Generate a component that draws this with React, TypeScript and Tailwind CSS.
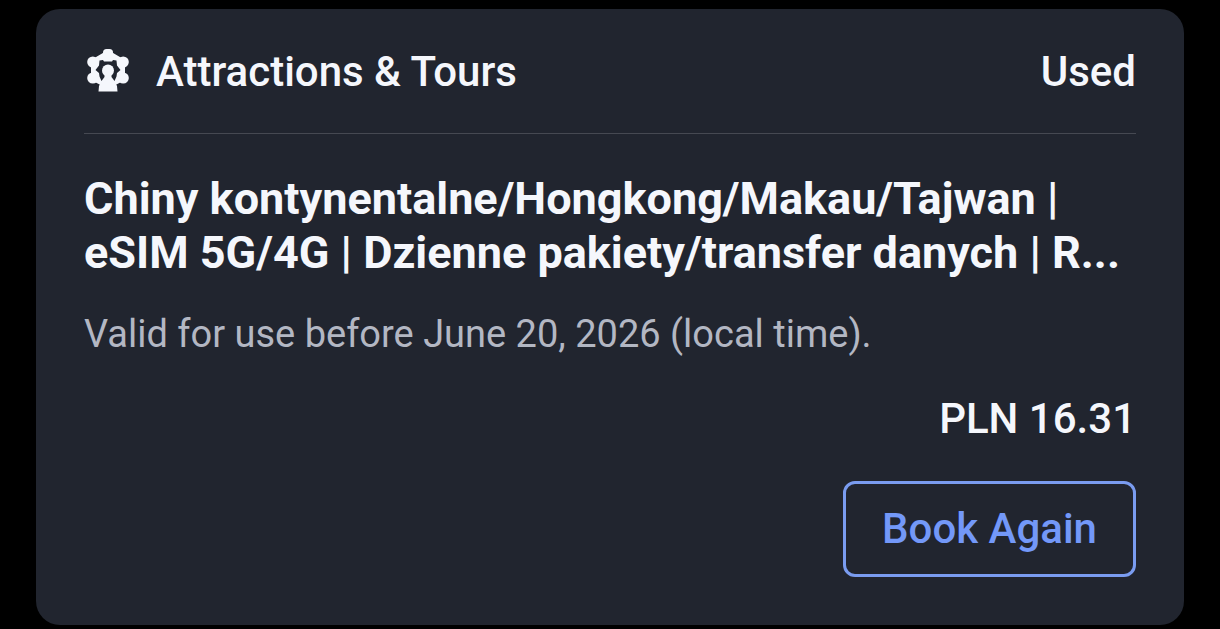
import React from 'react';

const booking = {
  category: 'Attractions & Tours',
  status: 'Used',
  title: [
    'Chiny kontynentalne/Hongkong/Makau/Tajwan |',
    'eSIM 5G/4G | Dzienne pakiety/transfer danych | R...',
  ],
  validity: 'Valid for use before June 20, 2026 (local time).',
  price: 'PLN 16.31',
};

function FerrisWheelIcon() {
  return (
    <svg viewBox="-2 2 44 44" className="size-11 shrink-0 overflow-visible" fill="currentColor" aria-hidden="true">
      {/* Wheel */}
      <path
        d="M22 5 36.5 13.5V30.5L22 38 7.5 30.5V13.5Z"
        stroke="currentColor"
        strokeWidth="5"
        strokeLinejoin="round"
      />
      {/* Cabins */}
      <rect x="17" y="1" width="10" height="9" rx="3.5" />
      <circle cx="6.8" cy="14" r="5.6" />
      <circle cx="37.2" cy="14" r="5.6" />
      <circle cx="6.8" cy="30" r="5.6" />
      <circle cx="37.2" cy="30" r="5.6" />
      {/* Gap between the rim and the hub */}
      <path
        d="M13.5 12.5 17 12 18 13.5H26L27 12 30.5 12.5 31 17.5 34.5 22 31 25 30.5 28.5 28.5 33H15.5L13.5 28.5 13 25 9.5 22 13 17.5Z"
        className="text-[#21252f]"
      />
      {/* Hub and stand */}
      <circle cx="22" cy="22.5" r="6" />
      <path d="M18.5 25H25.5V29L28.5 33 31 38 31.5 43.5H12.5L13 38 15.5 33 18.5 29Z" />
    </svg>
  );
}

export default function App() {
  return (
    <main className="min-h-screen bg-black px-9 pt-[9px] pb-1 font-['Roboto',sans-serif] text-[#f5f7fc]">
      <article className="rounded-3xl bg-[#21252f] px-12 pt-9 pb-12">
        {/* Header */}
        <header className="flex items-center justify-between border-b border-[#464952] pb-[34px] text-[42px] leading-[54px] font-medium">
          <div className="flex items-center gap-7">
            <FerrisWheelIcon />
            <span>{booking.category}</span>
          </div>
          <span>{booking.status}</span>
        </header>

        {/* Details */}
        <h2 className="mt-[38px] text-[45px] leading-[54px] font-bold">
          {booking.title.map((line) => (
            <span key={line} className="block whitespace-nowrap">
              {line}
            </span>
          ))}
        </h2>
        <p className="mt-7 text-[38px] leading-[52px] text-[#b3b7c3]">{booking.validity}</p>

        {/* Price and action */}
        <div className="mt-8 flex flex-col items-end gap-[35px] text-[42px] leading-[54px] font-medium">
          <span>{booking.price}</span>
          <button
            type="button"
            className="rounded-xl border-3 border-[#7a9cf0] px-9 py-[18px] text-[#7398f8]"
          >
            Book Again
          </button>
        </div>
      </article>
    </main>
  );
}
